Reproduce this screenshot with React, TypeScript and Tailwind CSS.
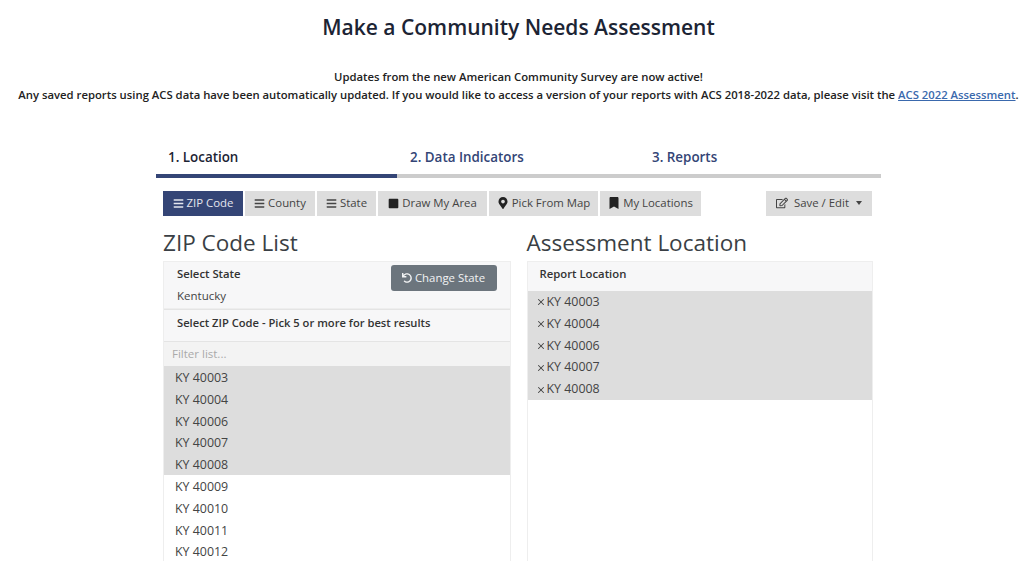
import { FaBars, FaBookmark, FaMapMarkerAlt, FaRegEdit, FaSquare, FaUndo } from "react-icons/fa";
import { X } from "lucide-react";
import type { ReactNode } from "react";

const selected = ["KY 40003", "KY 40004", "KY 40006", "KY 40007", "KY 40008"];
const others = ["KY 40009", "KY 40010", "KY 40011", "KY 40012"];

function ModeButton({ icon, label, width, active }: { icon: ReactNode; label: string; width: string; active?: boolean }) {
  return (
    <button
      className={
        active
          ? `flex h-[25px] items-center justify-center gap-[3px] bg-[#344576] pb-px text-[11.4px] text-[#e4e6ee] ${width}`
          : `flex h-[25px] items-center justify-center gap-[3px] bg-[#dddddd] pb-px text-[11.4px] text-[#444444] ${width}`
      }
    >
      {icon}
      {label}
    </button>
  );
}

export default function App() {
  return (
    <div className="h-[561px] overflow-hidden bg-white pl-[13px] font-['Open_Sans',sans-serif] text-[#333333]">
      <h1 className="pt-[13px] text-center text-[21px] leading-[29px] font-semibold text-[#1c2434]">
        Make a Community Needs Assessment
      </h1>
      <div className="mt-[26px] text-center text-[11.3px] leading-[18px] font-semibold text-[#222222]">
        <p>Updates from the new American Community Survey are now active!</p>
        <p>
          Any saved reports using ACS data have been automatically updated. If you would like to access a version of your reports with ACS 2018-2022 data, please visit the{" "}
          <a className="text-[#3a69ad] underline">ACS 2022 Assessment</a>.
        </p>
      </div>

      <div className="mx-auto mt-[41px] w-[725px]">
        <div className="flex text-[13.4px] font-semibold">
          <div className="w-[241px] border-b-4 border-[#344576] pt-[2px] pb-[6px] pl-[12px] leading-[21px] text-[#1c2434]">1. Location</div>
          <div className="w-[242px] border-b-4 border-[#cccccc] pt-[2px] pb-[6px] pl-[13px] leading-[21px] text-[#344576]">2. Data Indicators</div>
          <div className="w-[242px] border-b-4 border-[#cccccc] pt-[2px] pb-[6px] pl-[13px] leading-[21px] text-[#344576]">3. Reports</div>
        </div>

        <div className="mt-[13px] flex items-center pr-[9px] pl-[7px]">
          <div className="flex gap-[2px]">
            <ModeButton active width="w-[80px]" icon={<FaBars className="size-[11px]" />} label="ZIP Code" />
            <ModeButton width="w-[70px]" icon={<FaBars className="size-[11px]" />} label="County" />
            <ModeButton width="w-[59px]" icon={<FaBars className="size-[11px]" />} label="State" />
            <ModeButton width="w-[109px]" icon={<FaSquare className="size-[11px] text-[#222222]" />} label="Draw My Area" />
            <ModeButton width="w-[109px]" icon={<FaMapMarkerAlt className="size-[12px] text-[#222222]" />} label="Pick From Map" />
            <ModeButton width="w-[101px]" icon={<FaBookmark className="size-[12px] text-[#222222]" />} label="My Locations" />
          </div>
          <button className="ml-auto flex h-[25px] w-[106px] items-center justify-center gap-[6px] bg-[#dddddd] pb-px text-[11.4px] text-[#444444]">
            <FaRegEdit className="size-[12px]" />
            Save / Edit
            <span className="ml-[1px] border-x-[3.5px] border-t-[4px] border-x-transparent border-t-[#444444]" />
          </button>
        </div>

        <div className="mt-[12px] flex gap-[16px] pl-[7px]">
          <div className="w-[347.5px]">
            <h2 className="text-[22.5px] leading-[30px] text-[#3a3f45]">ZIP Code List</h2>
            <div className="mt-[3px] h-[320px] border-x border-[#eeeeee]">
              <div className="flex h-[48px] justify-between border-y border-[#eeeeee] bg-[#f7f7f8] pr-[13px] pl-[13px]">
                <div className="pt-[3px] text-[11.3px] leading-[18px]">
                  <p className="font-semibold">Select State</p>
                  <p className="mt-[4px] text-[11.5px] text-[#444444]">Kentucky</p>
                </div>
                <button className="mt-[3px] flex h-[26px] w-[106px] items-center justify-center gap-[3px] rounded-[3px] bg-[#6c757d] text-[11.4px] text-[#f2f3f4]">
                  <FaUndo className="size-[10px]" />
                  Change State
                </button>
              </div>
              <div className="h-[33px] border-y border-[#e4e4e4] bg-[#f7f7f8] pt-[4px] pl-[13px] text-[11.2px] leading-[18px] font-semibold">
                Select ZIP Code - Pick 5 or more for best results
              </div>
              <div className="h-[24px] bg-[#f3f3f3] pl-[8px] text-[11.5px] leading-[24px] text-[#aaaaaa]">Filter list...</div>
              <div className="bg-[#dddddd]">
                {selected.map((zip) => (
                  <div key={zip} className="h-[21.8px] pt-px pl-[11px] text-[12.4px] leading-[21px] text-[#444444]">{zip}</div>
                ))}
              </div>
              {others.map((zip) => (
                <div key={zip} className="h-[21.8px] pt-px pl-[11px] text-[12.4px] leading-[21px] text-[#444444]">{zip}</div>
              ))}
            </div>
          </div>

          <div className="w-[346.5px]">
            <h2 className="text-[22.5px] leading-[30px] text-[#3a3f45]">Assessment Location</h2>
            <div className="mt-[3px] h-[320px] border-x border-[#eeeeee]">
              <div className="h-[30px] border-t border-[#eeeeee] bg-[#f7f7f8] pt-[3px] pl-[12px] text-[11.3px] leading-[18px] font-semibold">
                Report Location
              </div>
              <div className="bg-[#dddddd]">
                {selected.map((zip) => (
                  <div key={zip} className="flex h-[21.8px] items-center gap-[1px] pt-px pl-[8px] text-[12.4px] text-[#444444]">
                    <X className="size-[10px]" strokeWidth={2.5} />
                    {zip}
                  </div>
                ))}
              </div>
            </div>
          </div>
        </div>
      </div>
    </div>
  );
}
